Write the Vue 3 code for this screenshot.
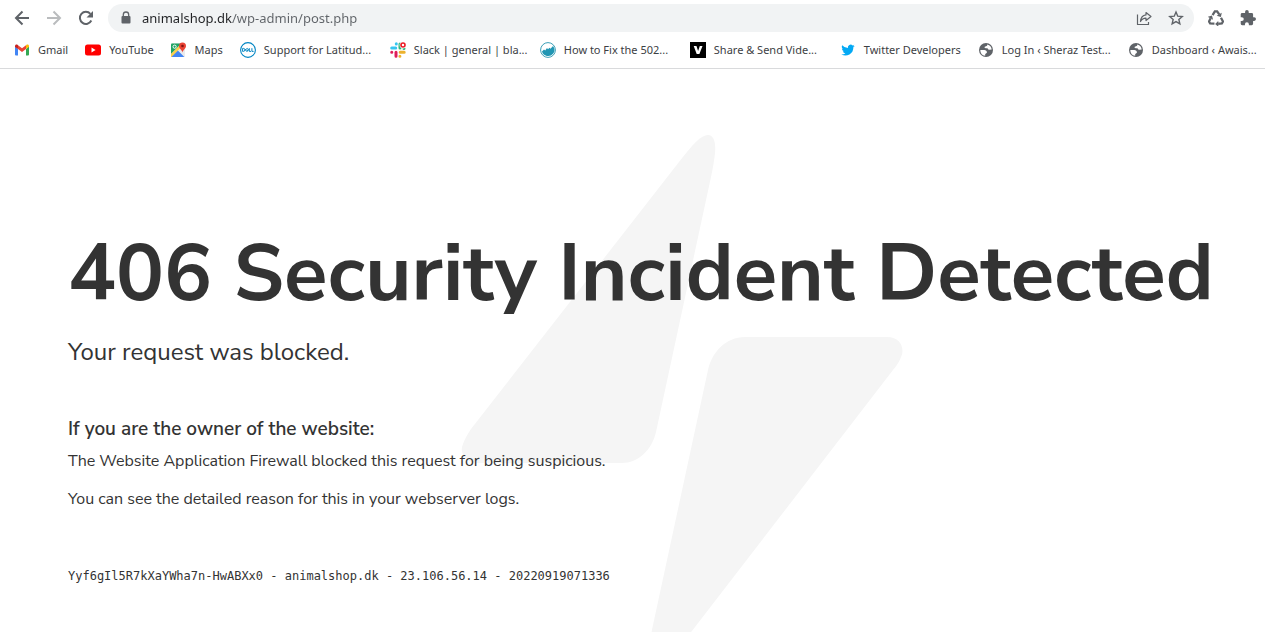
<script setup>
import { ref } from 'vue'

const address = ref('animalshop.dk/wp-admin/post.php')

const bookmarks = [
  { icon: 'gmail', label: 'Gmail' },
  { icon: 'youtube', label: 'YouTube' },
  { icon: 'maps', label: 'Maps' },
  { icon: 'dell', label: 'Support for Latitud...', long: true },
  { icon: 'slack', label: 'Slack | general | bla...', long: true },
  { icon: 'wave', label: 'How to Fix the 502...', long: true },
  { icon: 'vee', label: 'Share & Send Vide...', long: true },
  { icon: 'twitter', label: 'Twitter Developers' },
  { icon: 'globe', label: 'Log In ‹ Sheraz Test...', long: true },
  { icon: 'globe', label: 'Dashboard ‹ Awais...', long: true },
]
</script>

<template>
  <div class="page">
    <header class="chrome">
      <div class="toolbar">
        <button class="tool" type="button" aria-label="Back">
          <svg viewBox="0 0 16 16" fill="none" stroke="#5f6368" stroke-width="2"><path d="M15 8H2.5M8.5 1.5 2 8l6.500 6.500" /></svg>
        </button>
        <button class="tool" type="button" aria-label="Forward">
          <svg viewBox="0 0 16 16" fill="none" stroke="#babcbe" stroke-width="2"><path d="M1 8h12.500M7.500 1.500 14 8l-6.500 6.500" /></svg>
        </button>
        <button class="tool" type="button" aria-label="Reload">
          <svg viewBox="0 0 16 16"><path d="M13.300 10.500A6 6 0 1 1 12.400 3.900" fill="none" stroke="#5f6368" stroke-width="2" /><path d="M15 1v6.500H8.500z" fill="#5f6368" /></svg>
        </button>
        <div class="omnibox">
          <svg class="lock" viewBox="0 0 10 14"><path d="M2.300 5.500V3.700a2.700 2.700 0 0 1 5.400 0v1.800" fill="none" stroke="#5f6368" stroke-width="1.300" /><rect x="0.500" y="5" width="9" height="7.500" rx="1" fill="#5f6368" /></svg>
          <input v-model="address" class="address" type="text" aria-label="Address" />
          <button class="inner" type="button" aria-label="Share this page">
            <svg viewBox="0 0 16 16" fill="none" stroke="#5f6368" stroke-width="1.200" stroke-linejoin="round"><path d="M1.500 4.500v10h11v-2.500" /><path d="M10 2.500 15 6.500l-5 4V8.200C7.500 8.200 5.700 9.200 4.500 11.500 4.900 7.500 6.800 5.300 10 4.900z" /></svg>
          </button>
          <button class="inner" type="button" aria-label="Bookmark this tab">
            <svg viewBox="0 0 16 16" fill="none" stroke="#5f6368" stroke-width="1.400"><path d="m8 2 1.750 4.150 4.500.400-3.400 2.950 1 4.400L8 11.550 4.150 13.900l1-4.400-3.400-2.950 4.500-.400z" /></svg>
          </button>
        </div>
        <button class="tool" type="button" aria-label="Recycle extension">
          <svg viewBox="1 1 14 14" fill="none" stroke="#5f6368" stroke-width="2">
            <g v-for="turn in [0, 120, 240]" :key="turn" :transform="`rotate(${turn} 8 8.700)`"><path d="M5 5.400 7 2.200h2l1.800 2.700" /><path d="m13 3.400-.700 3.700-3.700-1z" fill="#5f6368" stroke="none" /></g>
          </svg>
        </button>
        <button class="tool" type="button" aria-label="Extensions">
          <svg viewBox="1 1 22 22" fill="#5f6368"><path d="M20.500 11H19V7a2 2 0 0 0-2-2h-4V3.500a2.500 2.500 0 0 0-5 0V5H4a2 2 0 0 0-2 2v3.800h1.500a2.700 2.700 0 0 1 0 5.400H2V20a2 2 0 0 0 2 2h3.800v-1.500a2.700 2.700 0 0 1 5.400 0V22H17a2 2 0 0 0 2-2v-4h1.500a2.500 2.500 0 0 0 0-5z" /></svg>
        </button>
      </div>

      <nav class="bookmarks" aria-label="Bookmarks">
        <a v-for="b in bookmarks" :key="b.label" class="bookmark" href="#">
          <svg v-if="b.icon === 'gmail'" class="favicon" viewBox="0 0 16 16"><path d="M1 4.500v8q0 1 1 1h2V7z" fill="#4285f4" /><path d="M15 4.500v8q0 1-1 1h-2V7z" fill="#34a853" /><path d="M12 3.500V7l3-2.200V4c0-1.600-1.500-2-2.500-1.200z" fill="#fbbc04" /><path d="M4 7V3.200L8 6.300l4-3.100V7l-4 3z" fill="#ea4335" /><path d="M1 4v.900L4 7V3.200l-.500-.400C2.500 2 1 2.600 1 4z" fill="#c5221f" /></svg>
          <svg v-else-if="b.icon === 'youtube'" class="favicon" viewBox="0 0 16 16"><rect y="2.500" width="16" height="11" rx="2.500" fill="#f00" /><path d="M6.500 5.600v4.800L10.600 8z" fill="#fff" /></svg>
          <svg v-else-if="b.icon === 'maps'" class="favicon" viewBox="0 0 16 16"><rect y="1.500" width="13.500" height="13.500" rx="1" fill="#dadce0" /><path d="M1 1.500h9.500L0 12V2.500q0-1 1-1z" fill="#1fa463" /><path d="M0 12 10.500 1.500 13 3 1 15H0z" fill="#fbd04b" /><path d="m7 8.500 6.500 6.500H.5z" fill="#4285f4" /><path d="m7 8.500 6.500 6.500V8L10 5.500z" fill="#e8eaed" /><circle cx="3.600" cy="4.700" r="1.600" fill="none" stroke="#fff" /><path d="M11.500 10.500C11 7.500 8 7 8 4a3.500 3.500 0 0 1 7 0c0 3-3 3.500-3.500 6.500z" fill="#ea4335" /><circle cx="11.500" cy="4" r="1.300" fill="#811411" /></svg>
          <svg v-else-if="b.icon === 'dell'" class="favicon" viewBox="0 0 16 16"><circle cx="8" cy="8" r="7.400" fill="#fff" stroke="#0085c3" stroke-width="1.100" /><path d="M2.600 6.400v3h.800q1.500 0 1.500-1.500T3.400 6.400zM5 8l2.200-1.500L8.600 7.500 6.800 8.800M5.300 8.100 7 9.400l1.700-1.300M9.300 6.200v3.200H11M11.900 6.200v3.200h1.700" fill="none" stroke="#0085c3" /></svg>
          <svg v-else-if="b.icon === 'slack'" class="favicon" viewBox="0 0 16 16" fill="none" stroke-width="3" stroke-linecap="round"><path d="M1.700 6h4M6.300 1.800v.100" stroke="#36c5f0" /><path d="M10 2v4M14 6.500v.100" stroke="#2eb67d" /><path d="M10.200 10.300h4M9.900 14.200v.100" stroke="#ecb22e" /><path d="M6 10.300v4M1.700 10.300h.100" stroke="#e01e5a" /><circle cx="13" cy="3" r="3.400" fill="#fff" stroke="none" /><circle cx="13" cy="3" r="2" stroke="#eb1c26" stroke-width="1.600" /></svg>
          <svg v-else-if="b.icon === 'wave'" class="favicon" viewBox="0 0 16 16"><circle cx="8" cy="8" r="7.400" fill="#fff" stroke="#3b9fb7" /><path d="M2 9.500 4 7.500l1.200 1L7 6l1 1.200 1.500-1.500 1 1L13 4a6.300 6.300 0 0 1 0 7.800A6.400 6.400 0 0 1 2 9.500z" fill="#2196b3" /></svg>
          <svg v-else-if="b.icon === 'vee'" class="favicon" viewBox="0 0 16 16"><rect width="16" height="16" fill="#000" /><path d="M3.700 4h2.800L8.100 9l1.700-5h2.700L9.400 12H6.700z" fill="#fff" /></svg>
          <svg v-else-if="b.icon === 'twitter'" class="favicon" viewBox="0 0 24 24"><path d="M22 5.900c-.700.300-1.500.500-2.300.600.800-.500 1.500-1.300 1.800-2.200-.800.500-1.700.800-2.600 1a4.100 4.100 0 0 0-7 3.700A11.600 11.600 0 0 1 3.400 4.700a4.100 4.100 0 0 0 1.300 5.500c-.700 0-1.300-.200-1.900-.500v.100a4.100 4.100 0 0 0 3.300 4c-.600.200-1.200.200-1.900.100a4.100 4.100 0 0 0 3.900 2.800A8.300 8.300 0 0 1 2 18.400 11.700 11.700 0 0 0 20 8c.800-.600 1.500-1.300 2-2.100z" fill="#03a9f4" /></svg>
          <svg v-else class="favicon" viewBox="0 0 16 16"><circle cx="8" cy="8" r="7" fill="#5f6368" /><path d="M2.300 8h4.200q1.700 0 2.300 1.500t-.800 2l-.800.500v1.800A5.800 5.800 0 0 1 2.300 8zM9.300 2.400q.200 1.600-1.300 1.800-1.700.200-1.500 1.300.200.700 1.500.700h1.500q.700 1.700 2 1.600l2.200-.300a5.800 5.800 0 0 0-4.400-5.100z" fill="#fff" /></svg>
          <span class="label" :class="{ long: b.long }">{{ b.label }}</span>
        </a>
      </nav>
    </header>

    <main class="content">
      <svg class="bolt" viewBox="0 0 442 532" fill="#f5f5f5" aria-hidden="true">
        <path d="M218 27C232 9 240 0 247 0c6 0 8 8 7 18q-1 10-4 24L195 297c-4 18-18 31-34 31H18C4 328-2 318 2 309q2-6 8-15z" />
        <path d="M224 505C210 523 202 532 195 532c-6 0-8-8-7-18q1-10 4-24L247 235c4-18 18-33 37-33H426c14 0 18 12 14 20q-2 6-8 13z" />
      </svg>
      <h1>406 Security Incident Detected</h1>
      <p class="lead">Your request was blocked.</p>
      <section class="owner">
        <h2>If you are the owner of the website:</h2>
        <p>The Website Application Firewall blocked this request for being suspicious.</p>
        <p>You can see the detailed reason for this in your webserver logs.</p>
      </section>
      <p class="trace">Yyf6gIl5R7kXaYWha7n-HwABXx0 - animalshop.dk - 23.106.56.14 - 20220919071336</p>
    </main>
  </div>
</template>

<style>
body {
  margin: 0;
  background: #fff;
}
</style>

<style scoped>
.page {
  display: flex;
  flex-direction: column;
  min-height: 100vh;
  color: #333;
}
.chrome {
  flex: none;
  border-bottom: 1px solid #d9dadc;
  font-family: "Noto Sans", sans-serif;
}
.toolbar {
  display: flex;
  align-items: center;
  gap: 16px;
  padding: 4px 9px 0 14px;
}
button {
  display: flex;
  flex: none;
  padding: 0;
  border: 0;
  background: none;
}
button svg {
  width: 16px;
  height: 16px;
}
.omnibox {
  display: flex;
  flex: 1;
  align-items: center;
  gap: 16px;
  height: 28px;
  margin-right: -2px;
  margin-left: -2px;
  padding: 0 10px 0 13px;
  border-radius: 14px;
  background: #f1f3f4;
}
.lock {
  flex: none;
  width: 10px;
  height: 14px;
}
.address {
  flex: 1;
  min-width: 0;
  height: 24px;
  margin-left: -5px;
  padding: 0;
  border: 0;
  outline: 0;
  background: linear-gradient(90deg, #202124 90px, #5f6368 90px) text;
  color: transparent;
  font: 13px/24px "Noto Sans", sans-serif;
}
.bookmarks {
  display: flex;
  gap: 17px;
  padding: 8px 0 8px 14px;
  overflow: hidden;
}
.bookmark {
  display: flex;
  flex: none;
  align-items: center;
  gap: 8px;
  height: 20px;
  color: #3c4043;
  font-size: 11px;
  line-height: 20px;
  text-decoration: none;
  white-space: nowrap;
}
.favicon {
  flex: none;
  width: 16px;
  height: 16px;
}
.label.long {
  width: 109px;
}
.content {
  position: relative;
  flex: 1;
  padding: 145px 56px 32px 68px;
  overflow: hidden;
  font-family: "Nunito Sans", Nunito, Lato, sans-serif;
}
.bolt {
  position: absolute;
  z-index: -1;
  top: 66px;
  left: 461px;
  width: 442px;
}
h1,
h2,
p {
  margin: 0;
}
h1 {
  font-size: 80px;
  font-weight: 700;
  line-height: 120px;
  white-space: nowrap;
}
.lead {
  font-size: 24px;
  line-height: 36px;
}
.owner {
  margin-top: 45px;
}
h2 {
  font-size: 19px;
  font-weight: 600;
  line-height: 28px;
}
.owner p {
  margin-bottom: 14px;
  padding-top: 6px;
  font-size: 16px;
  line-height: 24px;
}
.owner p + p {
  padding-top: 0;
}
.trace {
  padding-top: 39px;
  font: 12px/24px "DejaVu Sans Mono", monospace;
}
</style>
